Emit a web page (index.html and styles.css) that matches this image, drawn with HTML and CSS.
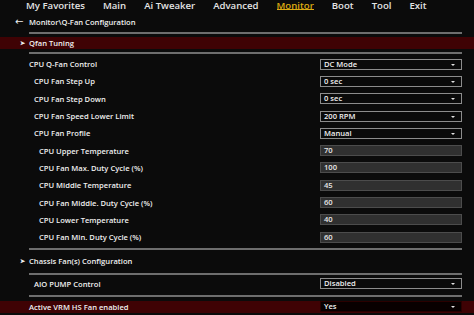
FILE: index.html
```html
<!DOCTYPE html>
<html lang="en">
<head>
    <meta charset="UTF-8">
    <title>Monitor - Q-Fan Configuration</title>
    <link rel="stylesheet" href="styles.css">
</head>
<body>
    <div class="nav">
        <span class="tab">My Favorites</span>
        <span class="tab">Main</span>
        <span class="tab">Ai Tweaker</span>
        <span class="tab">Advanced</span>
        <span class="tab active">Monitor</span>
        <span class="tab">Boot</span>
        <span class="tab">Tool</span>
        <span class="tab">Exit</span>
    </div>

    <div class="crumb">
        <span class="back">&#8592;</span>
        <span>Monitor\Q-Fan Configuration</span>
    </div>

    <div class="rule"></div>
    <div class="bar sub"><span class="tri">&#10148;</span>Qfan Tuning</div>
    <div class="rule"></div>

    <div class="rows">
        <div class="row"><span class="lbl l1">CPU Q-Fan Control</span><div class="drop">DC Mode</div></div>
        <div class="row"><span class="lbl l2">CPU Fan Step Up</span><div class="drop">0 sec</div></div>
        <div class="row"><span class="lbl l2">CPU Fan Step Down</span><div class="drop">0 sec</div></div>
        <div class="row"><span class="lbl l2">CPU Fan Speed Lower Limit</span><div class="drop">200 RPM</div></div>
        <div class="row"><span class="lbl l2">CPU Fan Profile</span><div class="drop">Manual</div></div>
        <div class="row"><span class="lbl l3">CPU Upper Temperature</span><div class="field">70</div></div>
        <div class="row"><span class="lbl l3">CPU Fan Max. Duty Cycle (%)</span><div class="field">100</div></div>
        <div class="row"><span class="lbl l3">CPU Middle Temperature</span><div class="field">45</div></div>
        <div class="row"><span class="lbl l3">CPU Fan Middle. Duty Cycle (%)</span><div class="field">60</div></div>
        <div class="row"><span class="lbl l3">CPU Lower Temperature</span><div class="field">40</div></div>
        <div class="row"><span class="lbl l3">CPU Fan Min. Duty Cycle (%)</span><div class="field">60</div></div>
    </div>

    <div class="rule"></div>
    <div class="sub plain"><span class="tri">&#10148;</span>Chassis Fan(s) Configuration</div>
    <div class="rule"></div>
    <div class="row tall"><span class="lbl l2">AIO PUMP Control</span><div class="drop">Disabled</div></div>
    <div class="rule"></div>
    <div class="bar row sel"><span class="lbl l1">Active VRM HS Fan enabled</span><div class="drop dark">Yes</div></div>
</body>
</html>
```

FILE: styles.css
```css
body {
    margin: 0;
    background-color: #0b0b0b;
    color: #f0f0f0;
    font-family: "Open Sans", sans-serif;
    font-weight: 600;
    font-size: 7.6px;
    overflow: hidden;
}
.nav {
    display: flex;
    gap: 18px;
    height: 13px;
    padding-left: 26px;
    font-size: 9.6px;
    line-height: 11px;
    color: #e4e4e4;
}
.tab.active {
    color: #dcaa12;
    border-bottom: 1px solid #dcaa12;
    height: 9px;
}
.crumb {
    display: flex;
    align-items: center;
    height: 17px;
    padding-left: 15px;
}
.back {
    width: 14px;
    font-family: "DejaVu Sans", sans-serif;
    font-size: 10px;
    font-weight: normal;
}
.rule {
    height: 2px;
    margin: 2px 12px 0 29px;
    background-color: #6e6e6e;
}
.bar {
    background-color: #3f0204;
}
.sub {
    display: flex;
    align-items: center;
    height: 12px;
    margin-top: 3px;
    padding-left: 20px;
}
.sub .tri {
    width: 9px;
    font-size: 6px;
}
.sub + .rule {
    margin-top: 3px;
}
.rows {
    margin-top: 1.5px;
}
.row {
    display: flex;
    align-items: center;
    justify-content: space-between;
    height: 17.3px;
    padding-right: 12px;
}
.lbl.l1 { padding-left: 29px; }
.lbl.l2 { padding-left: 34px; }
.lbl.l3 { padding-left: 39px; }
.drop, .field {
    box-sizing: border-box;
    width: 142px;
    height: 11px;
    line-height: 9px;
    padding-left: 3px;
    position: relative;
}
.drop {
    background-color: #0a0a0a;
    border: 1px solid #8c8c8c;
}
.drop::after {
    content: "";
    position: absolute;
    right: 6px;
    top: 4px;
    border-left: 2.5px solid transparent;
    border-right: 2.5px solid transparent;
    border-top: 2.5px solid #e0e0e0;
}
.field {
    background-color: #303030;
    border: 1px solid #4c4c4c;
    color: #e8e8e8;
}
.plain {
    height: 18px;
    margin-top: 2px;
}
.rows + .rule {
    margin-top: 2px;
}
.tall {
    height: 18px;
}
.sel {
    height: 12px;
    margin-top: 4px;
}
.drop.dark {
    background-color: #080000;
    border-color: #2a0000;
}
```
